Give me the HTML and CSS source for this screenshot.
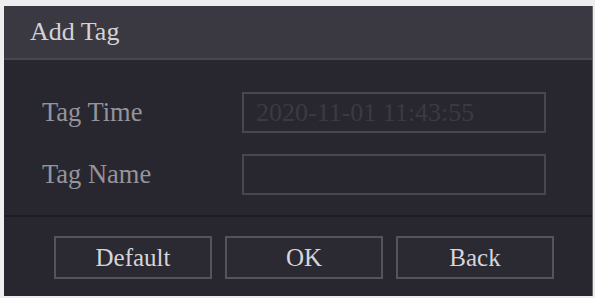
FILE: index.html
```html
<!DOCTYPE html>
<html lang="en">
<head>
    <meta charset="UTF-8">
    <title>Add Tag</title>
    <link rel="stylesheet" href="styles.css">
</head>
<body>
    <div class="dialog">
        <div class="title">Add Tag</div>
        <div class="form">
            <div class="row">
                <label>Tag Time</label>
                <div class="field disabled">2020-11-01 11:43:55</div>
            </div>
            <div class="row">
                <label>Tag Name</label>
                <div class="field"></div>
            </div>
        </div>
        <div class="footer">
            <button>Default</button>
            <button>OK</button>
            <button>Back</button>
        </div>
    </div>
</body>
</html>
```

FILE: styles.css
```css
body {
    margin: 0;
    background-color: #eeeeee;
    font-family: 'Liberation Serif', 'Times New Roman', serif;
}
.dialog {
    margin: 6px 2px 0 4px;
    width: 589px;
    height: 290px;
    background-color: #28272f;
    border-right: 1px solid #6a6970;
    box-sizing: border-box;
    display: flex;
    flex-direction: column;
}
.title {
    height: 52px;
    line-height: 52px;
    padding-left: 26px;
    background-color: #3a3941;
    border-bottom: 2px solid #48474f;
    color: #d4d3d8;
    font-size: 26px;
}
.form {
    padding: 32px 0 20px 38px;
    border-bottom: 2px solid #1d1c22;
    display: flex;
    flex-direction: column;
    gap: 21px;
}
.row {
    display: flex;
    align-items: center;
}
label {
    width: 200px;
    color: #95949b;
    font-size: 26.5px;
}
.field {
    width: 304px;
    height: 41px;
    border: 2px solid #48474f;
    box-sizing: border-box;
    padding-left: 12px;
    line-height: 37px;
    font-size: 26px;
    color: #3b3a43;
    white-space: nowrap;
    overflow: hidden;
}
.footer {
    padding: 19px 0 0 50px;
    display: flex;
    gap: 13px;
}
button {
    width: 158px;
    height: 43px;
    background-color: #2b2a32;
    border: 2px solid #55545c;
    color: #d6d5da;
    font-family: 'Liberation Serif', 'Times New Roman', serif;
    font-size: 25px;
    padding: 0;
}
```
